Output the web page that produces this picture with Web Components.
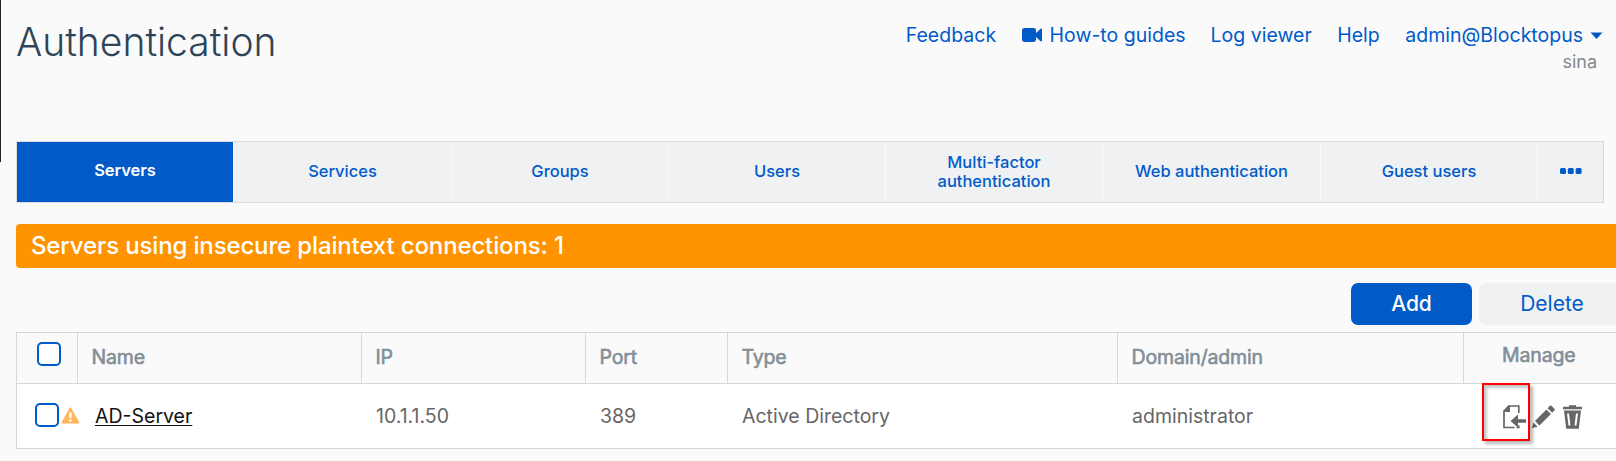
<!DOCTYPE html>
<html lang="en">
<head>
<meta charset="utf-8">
<title>Authentication</title>
<style>
html,body{margin:0;height:461px;overflow:hidden;background:#fafafa;font-family:Inter,"Liberation Sans",sans-serif}
</style>
</head>
<body>
<auth-page></auth-page>
<script>
const define=(name,html)=>customElements.define(name,class extends HTMLElement{
  constructor(){super();const t=document.createElement('template');t.innerHTML=html;
    this.attachShadow({mode:'open'}).appendChild(t.content.cloneNode(true));}
});

define('nav-link',`<style>
:host{display:flex;align-items:center;height:24px;font-size:19.5px;line-height:24px;color:#005bc8;white-space:nowrap}
</style><slot></slot>`);

define('video-icon',`<style>:host{display:block;width:20px;height:14px;margin-right:8px}svg{display:block}</style>
<svg width="20" height="14" viewBox="0 0 20 14"><rect width="14" height="14" rx="2.4" fill="#005bc8"/><path d="M14 5 18.6.7Q20 0 20 1.400V12.600Q20 14 18.600 13.300L14 9Z" fill="#005bc8"/></svg>`);

define('page-header',`<style>
:host{display:flex;justify-content:space-between;height:141px;padding:0 13px 0 16px;box-sizing:border-box}
h1{margin:18px 0 0;font-size:39px;line-height:47px;height:47px;font-weight:300;color:#2f4557;white-space:nowrap}
.right{padding-top:23px}
nav{display:flex}
.n1{margin-right:25.500px}.n2{margin-right:25px}.n3{margin-right:25.500px}.n4{margin-right:25.500px}
.caret{display:block;margin-left:7px}
.sub{font-size:18px;line-height:22px;color:#85898d;text-align:right;padding-right:6px;margin-top:4px}
</style>
<h1>Authentication</h1>
<div class="right"><nav>
<nav-link class="n1">Feedback</nav-link>
<nav-link class="n2"><video-icon></video-icon>How-to guides</nav-link>
<nav-link class="n3">Log viewer</nav-link>
<nav-link class="n4">Help</nav-link>
<nav-link>admin@Blocktopus<svg class="caret" width="13" height="7" viewBox="0 0 13 7"><path d="M.5.5H12.500L6.500 7Z" fill="#005bc8"/></svg></nav-link>
</nav><div class="sub">sina</div></div>`);

define('tab-item',`<style>
:host{display:flex;align-items:center;justify-content:center;box-sizing:border-box;height:60px;background:#f0f1f3;border-right:1px solid #fbfbfb;color:#005bc8;font-size:16.5px;line-height:19px;font-weight:500;text-align:center;padding-bottom:2px}
:host([active]){background:#005bc8;color:#fff;font-weight:600;letter-spacing:-.05px;padding-bottom:3px}
:host(:last-child){border-right:0}
</style><slot></slot>`);

define('tab-bar',`<style>
:host{display:grid;grid-template-columns:217px 218px 217px 217px 217px 218px 217px 65px;margin:0 12px 0 16px;border:1px solid #dadcde;height:60px}
svg{display:block}
.two{padding-top:1.500px}
</style>
<tab-item active>Servers</tab-item><tab-item>Services</tab-item><tab-item>Groups</tab-item><tab-item>Users</tab-item><tab-item><div class="two">Multi-factor<br>authentication</div></tab-item><tab-item>Web authentication</tab-item><tab-item>Guest users</tab-item><tab-item><svg width="22" height="6" viewBox="0 0 22 6" fill="#005bc8"><rect width="6" height="6" rx="1.500"/><rect x="7.800" width="6" height="6" rx="1.500"/><rect x="15.600" width="6" height="6" rx="1.500"/></svg></tab-item>`);

define('alert-banner',`<style>
:host{display:block;margin:21px 0 0 16px;height:44px;box-sizing:border-box;padding:7px 0 0 15px;background:#ff9400;color:#fff;border-radius:4px 0 0 4px;font-size:24px;line-height:29px;font-weight:500;letter-spacing:-.14px;white-space:nowrap}
</style><slot></slot>`);

define('action-button',`<style>
:host{display:flex;align-items:center;justify-content:center;flex:none;box-sizing:border-box;width:146px;height:42px;padding-bottom:1px;border-radius:7px;background:#f0f1f3;color:#005bc8;font-size:21px;line-height:26px}
:host([primary]){width:121px;background:#005bc8;color:#fff;font-weight:500}
</style><slot></slot>`);

define('action-row',`<style>
:host{display:flex;gap:7px;margin:15px 0 7px;padding-left:1351px;overflow:hidden}
</style><slot></slot>`);

define('check-box',`<style>
:host{display:block;box-sizing:border-box;width:24px;height:24px;border:2px solid #005bc8;border-radius:5px;background:#fff}
</style>`);

define('warning-icon',`<style>:host{display:block;width:19px;height:17px}svg{display:block}</style>
<svg width="19" height="17" viewBox="0 0 19 17"><path d="M9.500 1.200 17.600 15.800H1.200Z" fill="#ffb65c" stroke="#ffb65c" stroke-width="1.600" stroke-linejoin="round"/><path d="M8.200 5.500h2.500v5.500H8.200zM8.200 12.200h2.500v2.300H8.200z" fill="#fff"/></svg>`);

define('row-tools',`<style>:host{display:flex;position:relative}svg{display:block}
.mark{position:absolute;left:-21px;top:-22px;width:44px;height:54px;border:2px solid #f00;box-shadow:3px 3px 3px rgba(0,0,0,.28),inset 3px 3px 3px rgba(0,0,0,.22)}
.a{margin-right:6px}.b{margin-right:8px}
</style>
<svg class="a" width="23" height="24" viewBox="0 0 23 24"><path d="M15.800 8V1H6L1 6v16.500h10.500M15.800 20.500v2H13.500" fill="none" stroke="#666" stroke-width="1.700"/><path d="M7 .5v6.500H.8V5.800L5.500.5z" fill="#666"/><path d="M7.500 16 15 9.500v4.700h8v3.600h-8v4.700z" fill="#666"/></svg>
<svg class="b" width="23" height="24" viewBox="0 0 23 24"><path d="M3 16 14.400 4.400 19 9 7.400 20.600ZM15.600 3.200 17.800.8Q18.600.1 19.400.8L22.400 3.800Q23.100 4.600 22.400 5.400L20.200 7.800ZM0 23 1.400 17.600 5.600 21.800Z" fill="#666"/></svg>
<svg width="19" height="24" viewBox="0 0 19 24"><path d="M0 1.700H6V.3H13V1.700H19V4.300H0ZM1 5.600H18L15.800 23.700H3.200Z" fill="#666"/><path d="M5 8.500 6.500 20.500M14 8.500 12.500 20.500" stroke="#fff" stroke-width="2"/></svg>
<div class="mark"></div>`);

define('server-table',`<style>
:host{display:block;margin-left:16px;border:1px solid #d6d9dc;border-right:0;overflow:hidden;font-size:19.5px;line-height:24px;white-space:nowrap}
.row{display:grid;grid-template-columns:61px 284px 224px 142px 390px 346px 153px}
.head{height:50px;border-bottom:1px solid #d6d9dc;color:#828f98;letter-spacing:-.15px;-webkit-text-stroke:.6px #828f98}
.head>div{box-sizing:border-box;border-right:1px solid #d6d9dc;padding:12px 0 0 13.500px}
.head>div:last-child{border:0;padding:10px 0 0 38px}
.body{height:64px;background:#fff;color:#666}
.body>div{padding:20px 0 0 14px}
.head>.c{padding:9px 0 0 20px}
.body>.c{display:flex;gap:2px;padding:19px 0 0 18px}
warning-icon{margin-top:4px;flex:none}
check-box{flex:none}
.link{color:#111;text-decoration:underline;text-decoration-thickness:1px;text-underline-offset:2px}
.body>.name{padding-left:17px}
.body>.tools{padding:21px 0 0 39px}
</style>
<div class="row head"><div class="c"><check-box></check-box></div><div>Name</div><div>IP</div><div>Port</div><div>Type</div><div>Domain/admin</div><div>Manage</div></div>
<div class="row body"><div class="c"><check-box></check-box><warning-icon></warning-icon></div><div class="name"><span class="link">AD-Server</span></div><div>10.1.1.50</div><div>389</div><div>Active Directory</div><div>administrator</div><div class="tools"><row-tools></row-tools></div></div>`);

define('auth-page',`<style>
:host{display:block;position:relative;width:1616px;height:461px;overflow:hidden}
.edge{position:absolute;left:0;top:0;width:1px;height:162px;background:#222}
</style>
<page-header></page-header><tab-bar></tab-bar>
<alert-banner>Servers using insecure plaintext connections: 1</alert-banner>
<action-row><action-button primary>Add</action-button><action-button>Delete</action-button></action-row>
<server-table></server-table><div class="edge"></div>`);
</script>
</body>
</html>
